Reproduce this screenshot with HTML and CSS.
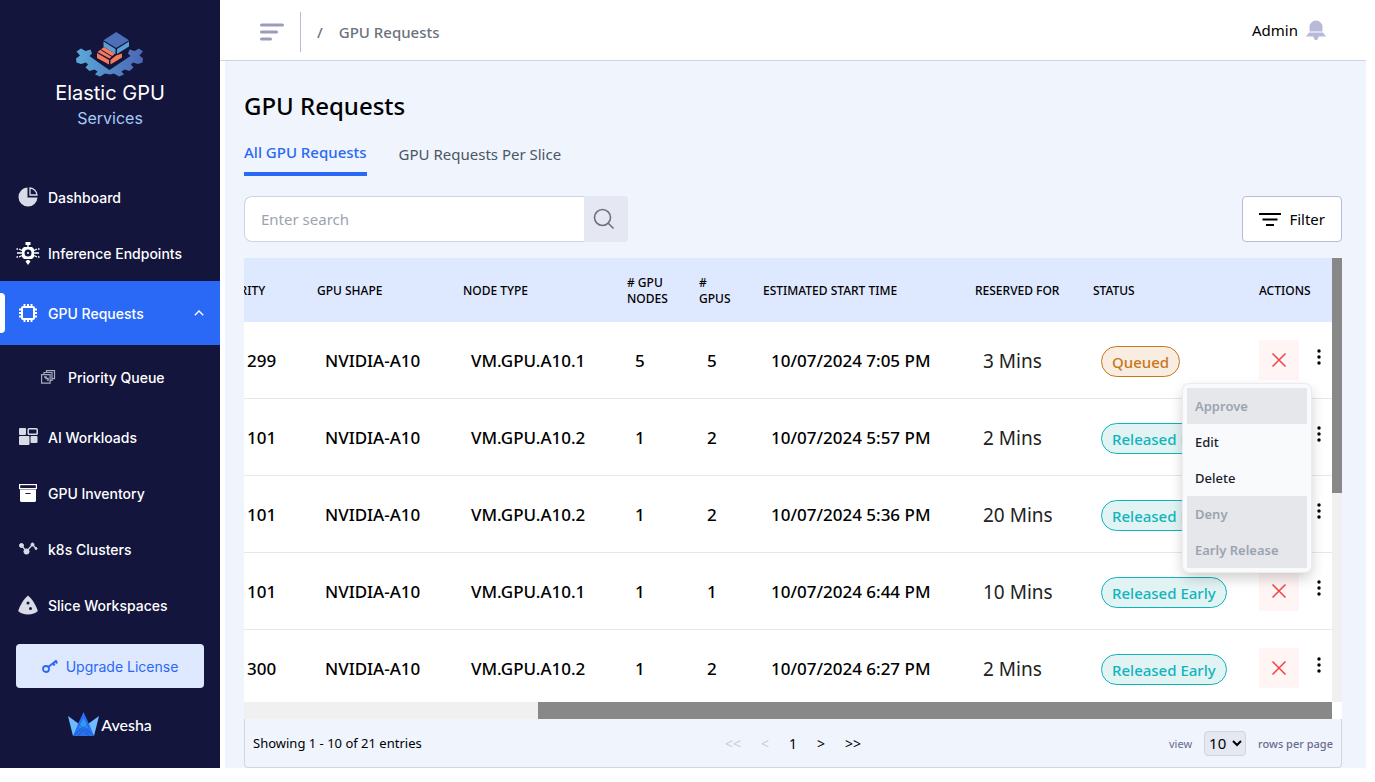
FILE: index.html
```html
<!DOCTYPE html>
<html lang="en">
<head>
<meta charset="utf-8">
<title>GPU Requests</title>
<meta name="viewport" content="width=device-width, initial-scale=1">
<link rel="stylesheet" href="styles.css">
</head>
<body>
<svg class="defs" aria-hidden="true">
  <symbol id="cross" viewBox="0 0 16 16"><path d="M1.500 1.500l13 13M14.500 1.500l-13 13" stroke="currentColor" stroke-width="1.500" fill="none"/></symbol>
  <symbol id="dots" viewBox="0 0 4 16"><circle cx="2" cy="2" r="1.700"/><circle cx="2" cy="8" r="1.700"/><circle cx="2" cy="14" r="1.700"/></symbol>
</svg>
<div class="app">
  <aside class="sidebar">
    <div class="brand">
      <svg width="68" height="46" viewBox="0 0 68 46" aria-hidden="true">
        <defs><linearGradient id="gear"><stop offset="0" stop-color="#5aa9d8"/><stop offset="1" stop-color="#4a66b4"/></linearGradient></defs>
        <path fill="url(#gear)" d="M5 16.500l4.500 2.500 5-1.500 1.500 4-2.500 2.500L26 33l7.500 5L41 33l13.500-9-2.500-2.500 1.500-4 5 1.500 4.500-2.500 4 3-3.500 4 3.500 3-.5 4-4.500 1.500-5-1.500-2 2 2.500 3-4 3.500-5-1.500-3 2 2.500 3-5 2-5-3-4 1-5-1-5 3-5-2 2.500-3-3-2-5 1.500-4-3.500 2.500-3-2-2-5 1.500L.500 30.500 0 26.500l4-3-3.500-4z"/>
        <path fill="#5c9fd4" d="M27.500 9.500L39.500 17v5l-12-7.500zM41 17l12-7.500v5L41 22z"/>
        <path fill="#4b6fb9" d="M40.200 0L53 8.200 40.200 16 27.500 8.200z"/>
        <path fill="#f47a5c" d="M28 15l11 6.500-5.500 5L21.500 20zM21 21l12 7v4.500l-12-6.500zM34.500 28L40 23.500l6-2v4l-11.500 7z"/>
        <path fill="none" stroke="#13153c" stroke-width="1" d="M24.500 17.500l11.500 7"/>
      </svg>
      <div class="brand-name">Elastic GPU</div>
      <div class="brand-sub">Services</div>
    </div>
    <nav class="nav">
      <a class="nav-item" href="#"><svg width="24" height="24" viewBox="0 0 24 24" fill="#dadbe8"><path d="M11.500 2.500a9.500 9.500 0 1 0 10 10h-10z"/><path d="M14 3v7h7a7.500 7.500 0 0 0-7-7z" fill="none" stroke="#dadbe8" stroke-width="1.300"/></svg>Dashboard</a>
      <a class="nav-item" href="#"><svg width="24" height="24" viewBox="0 0 24 24" fill="#fff"><path d="M9.500 1h5v3h-5zM11.300 4h1.400v3h-1.400zM9.500 20.500l1.500-1.500h2l1.500 1.500L12 24z"/><path fill-rule="evenodd" d="M8 6h8l2 2v8l-2 2H8l-2-2V8zm4 2.500a3.500 3.500 0 1 0 0 7 3.500 3.500 0 0 0 0-7z"/><circle cx="12" cy="12" r="1"/><path fill="none" stroke="#fff" stroke-width="1.300" d="M6 9.500L3 8M6 12H1M6 14.500L3 16M18 9.500L21 8M18 12h5M18 14.500l3 1.500M.500 8h1.500M.500 16h1.500M22 8h1.500M22 16h1.500"/></svg>Inference Endpoints</a>
      <a class="nav-item nav-active" href="#"><svg width="24" height="24" viewBox="0 0 24 24" fill="none" stroke="#fff" stroke-width="2"><rect x="6" y="6" width="12" height="12" rx="1"/><path d="M8.500 3v3M12 3v3M15.500 3v3M8.500 18v3M12 18v3M15.500 18v3M3 8.500h3M3 12h3M3 15.500h3M18 8.500h3M18 12h3M18 15.500h3"/></svg><span>GPU Requests</span><svg class="chevron" width="10" height="6" viewBox="0 0 10 6" fill="none" stroke="#fff" stroke-width="1.300"><path d="M.800 5.300L5 1l4.200 4.300"/></svg></a>
      <a class="nav-item nav-sub" href="#"><svg width="16" height="16" viewBox="0 0 16 16" fill="none" stroke="#a9aabd" stroke-width="1.200"><path d="M1.600 5.600h8.500v8.500H1.600zM4 5V3.500h8v8h-1.500M6.500 3V1.600h8v8h-2"/><path d="M4 8h2v1.500h2V12" stroke-width="1.500"/></svg>Priority Queue</a>
      <a class="nav-item" href="#"><svg width="24" height="24" viewBox="0 0 24 24" fill="#dadbe8"><rect x="3" y="3" width="7" height="7" rx="1"/><rect x="3" y="11" width="10.500" height="9" rx="1"/><rect x="14.500" y="11" width="7" height="7" rx="1"/><rect x="12.200" y="3.700" width="9" height="5.500" rx=".8" fill="none" stroke="#dadbe8" stroke-width="1.500"/></svg>AI Workloads</a>
      <a class="nav-item" href="#"><svg width="24" height="24" viewBox="0 0 24 24" fill="#fff"><rect x="3.600" y="3.600" width="16.800" height="4" fill="none" stroke="#fff" stroke-width="1.200"/><path fill-rule="evenodd" d="M4 8.500h16V20l-1 1H5l-1-1zM9.500 12v1h5v-1z"/></svg>GPU Inventory</a>
      <a class="nav-item" href="#"><svg width="24" height="24" viewBox="0 0 24 24" fill="#dadbe8" stroke="#dadbe8"><circle cx="5.500" cy="8.500" r="2"/><circle cx="10.500" cy="14.500" r="2.600"/><circle cx="16.500" cy="7.500" r="1.500"/><circle cx="20" cy="11.500" r="1"/><path fill="none" stroke-width="1.200" d="M5.500 8.500l5 6 6-7 3.500 4"/></svg>k8s Clusters</a>
      <a class="nav-item" href="#"><svg width="24" height="24" viewBox="0 0 24 24" fill="#dadbe8"><path d="M12 2.500c4 3.500 8 9.500 9.800 15.500C20 20 16 21.500 12 21.500S4 20 2.200 18C4 12 8 6 12 2.500z"/><circle cx="12" cy="10" r="1.500" fill="#13153c"/><circle cx="14.500" cy="15.500" r="1.500" fill="#13153c"/></svg>Slice Workspaces</a>
    </nav>
    <button class="upgrade" type="button"><svg width="16" height="14" viewBox="0 0 16 14" fill="none" stroke="#2a69f6" stroke-width="1.800"><circle cx="4" cy="10" r="3"/><path d="M6.200 8L14.500 1.500"/><path d="M11 4l1.500 2.500M13.500 1.500l1.500 3" stroke-width="2.200"/></svg>Upgrade License</button>
    <div class="vendor"><svg width="31" height="24" viewBox="0 0 31 24" aria-hidden="true"><path fill="#6cbcff" d="M0 4l11 8-3.500 12H5zM31 4l-11 8 3.500 12H26z"/><path fill="#2a6ff0" d="M15.500 0l6 13L26 24H5l5-12z"/><path fill="#2c9bf8" d="M15.500 6l4.500 9-4.500 3-4.500-3z"/><path fill="none" stroke="#1a55b8" stroke-width=".7" d="M5 24l10.500-9L26 24M11 12l10 12M20 12L10 24"/></svg>Avesha</div>
  </aside>

  <div class="page">
    <header class="topbar">
      <button class="toggle" type="button" aria-label="Toggle menu"><svg width="24" height="19" viewBox="0 0 24 19" fill="none" stroke="#9a9bbd" stroke-width="3" stroke-linecap="round"><path d="M1.500 2h21M1.500 9h15M1.500 16h9"/></svg></button>
      <div class="crumbs"><span>/</span><a href="#">GPU Requests</a></div>
      <div class="user">Admin<svg width="20" height="20" viewBox="0 0 20 20" fill="#b9b9da" aria-hidden="true"><path d="M3.500 11.500V7a6.500 6.500 0 0 1 13 0v4.500z"/><path d="M3 12.500h14l3 4H0zM7 16h6l-1 2.500-1 1.500H9l-1-1.500z"/></svg></div>
    </header>
    <main class="content">
      <h1>GPU Requests</h1>
      <div class="tabs">
        <a class="tab tab-active" href="#">All GPU Requests</a>
        <a class="tab" href="#">GPU Requests Per Slice</a>
      </div>
      <div class="tools">
        <form class="search">
          <input type="text" placeholder="Enter search" aria-label="Search">
          <button type="button" aria-label="Search"><svg width="22" height="22" viewBox="0 0 22 22" fill="none" stroke="#6b7280" stroke-width="1.600"><circle cx="9.500" cy="9.500" r="8"/><path d="M15 15l5.500 5.500"/></svg></button>
        </form>
        <button class="filter" type="button"><svg width="22" height="14" viewBox="0 0 22 14" fill="none" stroke="#000" stroke-width="2"><path d="M0 2h22M3.500 7.500h15M7 13h8"/></svg>Filter</button>
      </div>

      <div class="scroller">
        <div class="viewport">
          <table class="requests">
            <colgroup><col class="c-priority"><col class="c-shape"><col class="c-type"><col class="c-nodes"><col class="c-gpus"><col class="c-start"><col class="c-reserved"><col class="c-status"><col class="c-actions"></colgroup>
            <thead><tr><th>PRIORITY</th><th>GPU SHAPE</th><th>NODE TYPE</th><th># GPU NODES</th><th class="gpus"># GPUS</th><th>ESTIMATED START TIME</th><th>RESERVED FOR</th><th>STATUS</th><th>ACTIONS</th></tr></thead>
            <tbody>
              <tr><td class="priority">299</td><td>NVIDIA-A10</td><td>VM.GPU.A10.1</td><td>5</td><td>5</td><td>10/07/2024 7:05 PM</td><td class="reserved">3 Mins</td><td class="status"><span class="pill pill-queued">Queued</span></td>
                <td class="actions"><div class="action-set"><button class="deny" type="button" aria-label="Deny"><svg width="16" height="16"><use href="#cross"/></svg></button><button class="more" type="button" aria-label="More"><svg width="4" height="16"><use href="#dots"/></svg></button>
                  <div class="menu"><button type="button" disabled>Approve</button><button type="button">Edit</button><button type="button">Delete</button><button type="button" disabled>Deny</button><button type="button" disabled>Early Release</button></div></div></td></tr>
              <tr><td class="priority">101</td><td>NVIDIA-A10</td><td>VM.GPU.A10.2</td><td>1</td><td>2</td><td>10/07/2024 5:57 PM</td><td class="reserved">2 Mins</td><td class="status"><span class="pill">Released Early</span></td>
                <td class="actions"><div class="action-set"><button class="deny" type="button" aria-label="Deny"><svg width="16" height="16"><use href="#cross"/></svg></button><button class="more" type="button" aria-label="More"><svg width="4" height="16"><use href="#dots"/></svg></button></div></td></tr>
              <tr><td class="priority">101</td><td>NVIDIA-A10</td><td>VM.GPU.A10.2</td><td>1</td><td>2</td><td>10/07/2024 5:36 PM</td><td class="reserved">20 Mins</td><td class="status"><span class="pill">Released Early</span></td>
                <td class="actions"><div class="action-set"><button class="deny" type="button" aria-label="Deny"><svg width="16" height="16"><use href="#cross"/></svg></button><button class="more" type="button" aria-label="More"><svg width="4" height="16"><use href="#dots"/></svg></button></div></td></tr>
              <tr><td class="priority">101</td><td>NVIDIA-A10</td><td>VM.GPU.A10.1</td><td>1</td><td>1</td><td>10/07/2024 6:44 PM</td><td class="reserved">10 Mins</td><td class="status"><span class="pill">Released Early</span></td>
                <td class="actions"><div class="action-set"><button class="deny" type="button" aria-label="Deny"><svg width="16" height="16"><use href="#cross"/></svg></button><button class="more" type="button" aria-label="More"><svg width="4" height="16"><use href="#dots"/></svg></button></div></td></tr>
              <tr><td class="priority">300</td><td>NVIDIA-A10</td><td>VM.GPU.A10.2</td><td>1</td><td>2</td><td>10/07/2024 6:27 PM</td><td class="reserved">2 Mins</td><td class="status"><span class="pill">Released Early</span></td>
                <td class="actions"><div class="action-set"><button class="deny" type="button" aria-label="Deny"><svg width="16" height="16"><use href="#cross"/></svg></button><button class="more" type="button" aria-label="More"><svg width="4" height="16"><use href="#dots"/></svg></button></div></td></tr>
            </tbody>
          </table>
        </div>
        <div class="track track-y"><div class="thumb-y"></div></div>
        <div class="track track-x"><div class="thumb-x"></div></div>
      </div>

      <footer class="pager">
        <div class="showing">Showing 1 - 10 of 21 entries</div>
        <div class="pages"><button type="button" disabled>&lt;&lt;</button><button type="button" disabled>&lt;</button><button class="current" type="button">1</button><button type="button">&gt;</button><button type="button">&gt;&gt;</button></div>
        <div class="view"><label for="rows">view</label><select id="rows"><option>10</option><option>20</option></select><span class="per-page">rows per page</span></div>
      </footer>
    </main>
  </div>
</div>
</body>
</html>
```
FILE: styles.css
```css
* { box-sizing: border-box; }

body {
  margin: 0;
  background: #fff;
  color: #000;
  font-family: "Noto Sans", "Open Sans", sans-serif;
  font-size: 15px;
}

button, input, select { font: inherit; color: inherit; }
button { border: 0; background: none; padding: 0; cursor: pointer; }
a { color: inherit; text-decoration: none; }
.defs { display: none; }

.app {
  display: flex;
  height: calc(100vh - 14px);
  padding-right: 9px;
}

/* Sidebar */
.sidebar {
  flex: 0 0 220px;
  display: flex;
  flex-direction: column;
  background: #13153c;
  color: #fff;
  font-family: Inter, sans-serif;
}
.brand {
  display: flex;
  flex-direction: column;
  align-items: center;
  height: 169px;
  padding-top: 32px;
}
.brand-name { font-size: 20px; line-height: 30px; }
.brand-sub { font-size: 16px; line-height: 20px; color: #a5caf8; }
.nav-item {
  display: flex;
  align-items: center;
  gap: 8px;
  height: 56px;
  padding: 0 16px;
  font-size: 14px;
  font-weight: 500;
}
.nav-active {
  position: relative;
  height: 64px;
  background: #2a69f6;
}
.nav-active::before {
  content: "";
  position: absolute;
  left: 0;
  top: 12px;
  width: 5px;
  height: 40px;
  border-radius: 0 4px 4px 0;
  background: #fff;
}
.chevron { margin-left: auto; }
.nav-sub {
  height: 64px;
  padding-left: 40px;
  gap: 12px;
}
.upgrade {
  display: flex;
  align-items: center;
  justify-content: center;
  gap: 8px;
  height: 44px;
  margin: 11px 16px 0;
  border-radius: 4px;
  background: #dee8ff;
  color: #2a69f6;
  font-size: 14px;
}
.vendor {
  display: flex;
  justify-content: center;
  align-items: center;
  gap: 2px;
  margin-top: 24px;
  font-family: Lato, sans-serif;
  font-size: 16px;
  font-weight: 500;
}

/* Top bar */
.page {
  flex: 1;
  min-width: 0;
  display: flex;
  flex-direction: column;
}
.topbar {
  display: flex;
  align-items: center;
  height: 61px;
  padding: 4px 40px 0;
  border-bottom: 1px solid #d1d3e0;
}
.toggle {
  display: flex;
  align-items: center;
  height: 40px;
  padding-right: 16px;
  border-right: 1px solid #b9b9da;
}
.crumbs {
  display: flex;
  gap: 16px;
  margin-left: 16px;
  color: #6b7280;
  font-weight: 500;
}
.user {
  display: flex;
  align-items: center;
  gap: 8px;
  margin-left: auto;
  padding-bottom: 4px;
}

/* Content */
.content {
  flex: 1;
  min-height: 0;
  display: flex;
  flex-direction: column;
  margin-left: 5px;
  padding: 29px 24px 0 19px;
  background: #eff4fd;
}
h1 {
  margin: 0;
  font-size: 24px;
  font-weight: 500;
  line-height: 32px;
}
.tabs {
  display: flex;
  gap: 32px;
  margin-top: 20px;
}
.tab {
  height: 34px;
  line-height: 24px;
  color: #4b5563;
}
.tab-active {
  line-height: 20px;
  border-bottom: 4px solid #2a69f6;
  color: #2a69f6;
  font-weight: 500;
}
.tools {
  display: flex;
  justify-content: space-between;
  margin: 20px 0 16px;
}
.search {
  display: flex;
  width: 35%;
  height: 46px;
}
.search input {
  flex: 1;
  min-width: 0;
  padding: 0 16px;
  border: 1px solid #d1d5db;
  border-right: 0;
  border-radius: 8px 0 0 8px;
  background: #fff;
}
.search input::placeholder { color: #9ca3af; }
.search button {
  display: flex;
  align-items: center;
  width: 44px;
  padding-left: 9px;
  border-radius: 0 4px 4px 0;
  background: #e5e7f3;
}
.filter {
  display: flex;
  align-items: center;
  gap: 8px;
  padding: 0 16px;
  border: 1px solid #b9b9da;
  border-radius: 4px;
  background: #fff;
}

/* Scrolling table */
.scroller {
  flex: 1;
  min-height: 0;
  display: grid;
  grid-template: 1fr 17px / 1fr 10px;
  background: #fff;
}
.viewport {
  display: flex;
  justify-content: flex-end;
  align-items: flex-start;
  min-width: 0;
  min-height: 0;
  overflow: hidden;
}
.track { background: #f0f0f0; }
.thumb-y { height: 53%; background: #888; }
.thumb-x { width: 73%; height: 17px; margin-left: auto; background: #888; }

.requests {
  flex: none;
  width: 100%;
  min-width: 1129px;
  table-layout: fixed;
  border-collapse: separate;
  border-spacing: 0;
}
.c-priority { width: 106px; }
.c-shape { width: 146px; }
.c-type { width: 164px; }
.c-nodes { width: 72px; }
.c-gpus { width: 64px; }
.c-start { width: 212px; }
.c-reserved { width: 118px; }
.c-status { width: 166px; }
.c-actions { width: 81px; }
th {
  height: 64px;
  padding: 2px 8px 0;
  background: #dee8ff;
  text-align: left;
  font-size: 12px;
  font-weight: 500;
  line-height: 16px;
}
th.gpus { padding-right: 16px; }
td {
  height: 77px;
  padding: 0 0 0 16px;
  border-bottom: 1px solid #e5e7eb;
  font-size: 17px;
  font-weight: 500;
  white-space: nowrap;
}
td.priority { padding-left: 44px; }
td.reserved { padding-top: 2px; font-size: 19px; font-weight: 400; color: #222; }
td.status { padding-top: 2px; }
td.actions { padding-left: 8px; }
.pill {
  display: inline-flex;
  align-items: center;
  height: 31px;
  padding: 1px 10px 0;
  border: 1px solid #0eb5bd;
  border-radius: 16px;
  background: #e2f3f3;
  color: #0eb5bd;
  font-size: 15px;
  vertical-align: middle;
}
.pill-queued {
  border-color: #c7771c;
  background: #f8ede0;
  color: #c7771c;
}
.action-set {
  position: relative;
  display: flex;
  align-items: center;
  gap: 18px;
}
.deny {
  display: flex;
  align-items: center;
  justify-content: center;
  width: 40px;
  height: 40px;
  background: #fff5f4;
  color: #ef4444;
}
.more { display: flex; padding-bottom: 6px; }
.menu {
  position: absolute;
  top: 44px;
  right: 21px;
  z-index: 2;
  width: 128px;
  padding: 4px;
  border-radius: 6px;
  background: #f9fafc;
  box-shadow: 0 0 0 1px #ececf0, 0 6px 14px rgba(0, 0, 0, .2);
}
.menu button {
  display: block;
  width: 100%;
  height: 36px;
  padding: 0 8px;
  text-align: left;
  color: #1b1b2d;
  font-size: 13px;
  font-weight: 500;
}
.menu button:disabled {
  background: #e5e7eb;
  color: #9ca3af;
  font-weight: 600;
}

/* Pager */
.pager {
  display: grid;
  grid-template-columns: 1fr auto 1fr;
  align-items: center;
  height: 49px;
  padding: 0 8px;
  border: 1px solid #d1d5e0;
  border-top: 0;
  border-radius: 0 0 4px 4px;
  font-size: 13px;
}
.pages { display: flex; gap: 20px; font-size: 14px; }
.pages button:disabled { color: #c9ccd6; }
.view {
  display: flex;
  justify-content: flex-end;
  align-items: center;
  gap: 12px;
  color: #6b6b90;
  font-size: 11px;
}
.per-page { font-weight: 500; }
.view select {
  width: 42px;
  height: 25px;
  border: 1px solid #d1d5e0;
  border-radius: 4px;
  background: #e5e7f3;
  color: #000;
  font-size: 15px;
}
```
